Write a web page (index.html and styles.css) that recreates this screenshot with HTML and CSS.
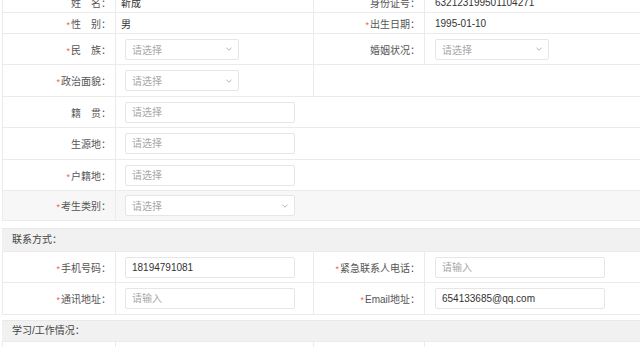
FILE: index.html
```html
<!DOCTYPE html>
<html lang="zh-CN">
<head>
    <meta charset="UTF-8">
    <meta name="viewport" content="width=device-width, initial-scale=1.0">
    <title>考生信息</title>
    <link rel="stylesheet" href="styles.css">
</head>
<body>

    <div class="page">
        <table class="form-table">
            <colgroup>
                <col class="c-label">
                <col class="c-value">
                <col class="c-label2">
                <col>
            </colgroup>
            <tr class="row-text">
                <td class="label">姓&emsp;名：</td>
                <td class="value plain">靳成</td>
                <td class="label">身份证号：</td>
                <td class="value right">632123199501104271</td>
            </tr>
            <tr class="row-text">
                <td class="label"><span class="req">*</span>性&emsp;别：</td>
                <td class="value plain">男</td>
                <td class="label"><span class="req">*</span>出生日期：</td>
                <td class="value right">1995-01-10</td>
            </tr>
            <tr class="row-input">
                <td class="label"><span class="req">*</span>民&emsp;族：</td>
                <td class="value">
                    <div class="select short"><span>请选择</span><svg width="6" height="4" viewBox="0 0 6 4"><polyline points="0.5,0.8 3,3.2 5.5,0.8" fill="none" stroke="#b5b5b5" stroke-width="1"/></svg></div>
                </td>
                <td class="label">婚姻状况：</td>
                <td class="value right">
                    <div class="select short"><span>请选择</span><svg width="6" height="4" viewBox="0 0 6 4"><polyline points="0.5,0.8 3,3.2 5.5,0.8" fill="none" stroke="#b5b5b5" stroke-width="1"/></svg></div>
                </td>
            </tr>
            <tr class="row-input tall">
                <td class="label"><span class="req">*</span>政治面貌：</td>
                <td class="value">
                    <div class="select short"><span>请选择</span><svg width="6" height="4" viewBox="0 0 6 4"><polyline points="0.5,0.8 3,3.2 5.5,0.8" fill="none" stroke="#b5b5b5" stroke-width="1"/></svg></div>
                </td>
                <td class="value" colspan="2"></td>
            </tr>
            <tr class="row-input">
                <td class="label">籍&emsp;贯：</td>
                <td class="value wide" colspan="3"><input type="text" placeholder="请选择"></td>
            </tr>
            <tr class="row-input tall">
                <td class="label">生源地：</td>
                <td class="value wide" colspan="3"><input type="text" placeholder="请选择"></td>
            </tr>
            <tr class="row-input">
                <td class="label"><span class="req">*</span>户籍地：</td>
                <td class="value wide" colspan="3"><input type="text" placeholder="请选择"></td>
            </tr>
            <tr class="row-input low active">
                <td class="label"><span class="req">*</span>考生类别：</td>
                <td class="value wide" colspan="3">
                    <div class="select long"><span>请选择</span><svg width="6" height="4" viewBox="0 0 6 4"><polyline points="0.5,0.8 3,3.2 5.5,0.8" fill="none" stroke="#b5b5b5" stroke-width="1"/></svg></div>
                </td>
            </tr>
        </table>

        <div class="section-title">联系方式：</div>
        <table class="form-table">
            <colgroup>
                <col class="c-label">
                <col class="c-value">
                <col class="c-label2">
                <col>
            </colgroup>
            <tr class="row-input">
                <td class="label"><span class="req">*</span>手机号码：</td>
                <td class="value"><input type="text" value="18194791081"></td>
                <td class="label"><span class="req">*</span>紧急联系人电话：</td>
                <td class="value right"><input type="text" placeholder="请输入"></td>
            </tr>
            <tr class="row-input tall">
                <td class="label"><span class="req">*</span>通讯地址：</td>
                <td class="value"><input type="text" placeholder="请输入"></td>
                <td class="label"><span class="req">*</span>Email地址：</td>
                <td class="value right"><input type="text" value="654133685@qq.com"></td>
            </tr>
        </table>

        <div class="section-title small">学习/工作情况：</div>
        <table class="form-table">
            <colgroup>
                <col class="c-label">
                <col class="c-value">
                <col class="c-label2">
                <col>
            </colgroup>
            <tr class="row-input">
                <td class="label"><span class="req">*</span>学习经历：</td>
                <td class="value"><input type="text" placeholder="请输入"></td>
                <td class="label">工作单位：</td>
                <td class="value right"><input type="text" placeholder="请输入"></td>
            </tr>
        </table>
    </div>

</body>
</html>
```

FILE: styles.css
```css
* {
    margin: 0;
    padding: 0;
    box-sizing: border-box;
}
body {
    font-family: "Liberation Sans", "Noto Sans CJK SC", sans-serif;
    font-size: 10px;
    color: #333;
    background-color: #fff;
    overflow: hidden;
}
.page {
    margin-top: -9px;
    padding-left: 2px;
    width: 780px;
}
.form-table {
    width: 100%;
    border-collapse: collapse;
    table-layout: fixed;
}
.c-label {
    width: 113px;
}
.c-value {
    width: 198px;
}
.c-label2 {
    width: 111px;
}
.form-table td {
    border: 1px solid #ebebeb;
    vertical-align: middle;
    white-space: nowrap;
}
.row-text td {
    height: 21px;
}
.row-input td {
    height: 31px;
}
.row-input.tall td {
    height: 32px;
}
.row-input.low td {
    height: 30px;
}
.active td {
    background-color: #f7f7f7;
}
.label {
    text-align: right;
    padding-right: 4px;
    color: #555;
}
.req {
    color: #f0615a;
    font-size: 9px;
    margin-right: 1px;
}
.value {
    padding-left: 9px;
}
.value.plain {
    padding-left: 5px;
}
.value.right {
    padding-left: 10px;
}
input {
    display: block;
    width: 170px;
    height: 21px;
    border: 1px solid #e6e6e6;
    border-radius: 2px;
    padding: 0 6px;
    font-family: inherit;
    font-size: 10px;
    color: #333;
    background-color: #fff;
    outline: none;
}
input::placeholder {
    color: #a8a8a8;
}
.select {
    display: flex;
    align-items: center;
    justify-content: space-between;
    height: 21px;
    border: 1px solid #e6e6e6;
    border-radius: 2px;
    padding: 0 6px;
    color: #a8a8a8;
    background-color: #fff;
}
.select.short {
    width: 114px;
}
.select.long {
    width: 170px;
}
.section-title {
    margin-top: 7px;
    height: 23px;
    line-height: 22px;
    padding-left: 10px;
    background-color: #f1f1f1;
    border-top: 1px solid #e9e9e9;
    color: #444;
}
.section-title.small {
    margin-top: 5px;
    height: 21px;
    line-height: 20px;
}
```
